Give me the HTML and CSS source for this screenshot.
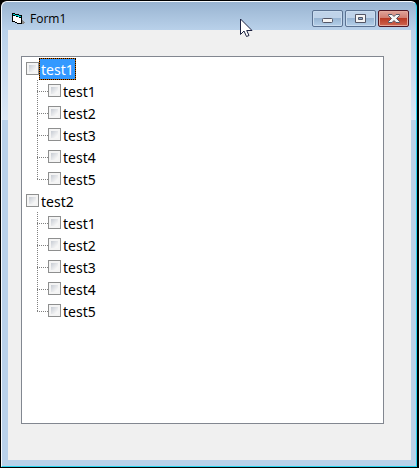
FILE: index.html
```html
<!doctype html>
<html lang="en">
    <head>
        <meta charset="UTF-8" />
        <meta name="viewport" content="width=device-width, initial-scale=1.0" />
        <title>Form1</title>
        <link rel="stylesheet" href="styles.css">
    </head>
    <body>
        <div class="window">
            <header class="titlebar">
                <svg class="app-icon" width="13" height="13" viewBox="0 0 13 13" shape-rendering="crispEdges">
                    <path d="M10 8h1v1h1v1h1v1h-1v1h-2z" fill="#888" />
                    <path d="M0 1h3v1h4v1h3v9H5v-1H3v-1H0z" fill="#000" />
                    <path d="M1 4h3v1h3v1h2v5H5v-1H3V9H1z" fill="#fff" />
                    <path d="M1 2h2v1h4v1h2v1H6V4H3V3H1z" fill="#00d5d5" />
                </svg>
                <h1 class="title">Form1</h1>
                <div class="controls">
                    <button class="control" type="button" aria-label="Minimize">
                        <svg width="12" height="12" viewBox="0 0 12 12">
                            <rect x=".5" y="6.5" width="10" height="4" rx="1" fill="#f4f4f4" stroke="#535666" />
                        </svg>
                    </button>
                    <button class="control" type="button" aria-label="Maximize">
                        <svg width="12" height="12" viewBox="0 0 12 12">
                            <path d="M.5 2.5h10v8H.5z" fill="#f4f4f4" stroke="#535666" stroke-linejoin="round" />
                            <path d="M3.5 5.5h4v2h-4z" fill="#8eaed0" stroke="#535666" />
                        </svg>
                    </button>
                    <button class="control close" type="button" aria-label="Close">
                        <svg width="12" height="12" viewBox="0 0 12 12">
                            <path d="M.5 2.500h3.500L6 4.500l2-2h3.500v1L8.500 6.500l3 3v1H8l-2-2-2 2H.5v-1l3-3-3-3z" fill="#f6f6f6" stroke="#535666" stroke-linejoin="round" />
                        </svg>
                    </button>
                </div>
            </header>
            <main class="client">
                <ul class="tree">
                    <li>
                        <label class="node"><input class="check" type="checkbox" /><span class="text selected">test1</span></label>
                        <ul class="branch">
                            <li><label class="node"><input class="check" type="checkbox" /><span class="text">test1</span></label></li>
                            <li><label class="node"><input class="check" type="checkbox" /><span class="text">test2</span></label></li>
                            <li><label class="node"><input class="check" type="checkbox" /><span class="text">test3</span></label></li>
                            <li><label class="node"><input class="check" type="checkbox" /><span class="text">test4</span></label></li>
                            <li><label class="node"><input class="check" type="checkbox" /><span class="text">test5</span></label></li>
                        </ul>
                    </li>
                    <li>
                        <label class="node"><input class="check" type="checkbox" /><span class="text">test2</span></label>
                        <ul class="branch">
                            <li><label class="node"><input class="check" type="checkbox" /><span class="text">test1</span></label></li>
                            <li><label class="node"><input class="check" type="checkbox" /><span class="text">test2</span></label></li>
                            <li><label class="node"><input class="check" type="checkbox" /><span class="text">test3</span></label></li>
                            <li><label class="node"><input class="check" type="checkbox" /><span class="text">test4</span></label></li>
                            <li><label class="node"><input class="check" type="checkbox" /><span class="text">test5</span></label></li>
                        </ul>
                    </li>
                </ul>
            </main>
        </div>
        <svg class="pointer" width="13" height="20" viewBox="0 0 13 20">
            <path d="M.5 1v15.500L4 13l2.500 5.500 2.500-1L6.700 12.500h5.300z" fill="#fff" stroke="#1c2140" />
        </svg>
    </body>
</html>
```

FILE: styles.css
```css
* {
    box-sizing: border-box;
}

body {
    display: flex;
    min-height: 100vh;
    margin: 0;
    padding: 1px 2px 1px 1px;
    background: #000;
    font-family: "Open Sans", "Noto Sans", sans-serif;
    color: #000;
}

.window {
    flex: 1;
    display: flex;
    flex-direction: column;
    padding: 0 5px 6px 6px;
    border: 1px solid #27d3ee;
    border-top-color: #f5f9fd;
    border-left-color: #f5f9fd;
    border-radius: 6px 6px 0 0;
    background:
        linear-gradient(#99b4d1, #b9d1ea) 0 0 / 100% 28px no-repeat,
        linear-gradient(#b9d1ea, #dce8f6) 0 28px / 100% 90px no-repeat,
        #b9d1ea;
}

.titlebar {
    display: flex;
    align-items: center;
    height: 28px;
    padding: 5px 2px 0 4px;
}

.app-icon {
    margin-right: 5px;
}

.title {
    flex: 1;
    margin: 0;
    font-size: 12px;
    font-weight: normal;
    line-height: 16px;
}

.controls {
    display: flex;
    gap: 2px;
}

.control {
    display: flex;
    align-items: center;
    justify-content: center;
    width: 31px;
    height: 17px;
    padding: 0 0 2px;
    border: 1px solid #5b7292;
    border-radius: 2px;
    background: linear-gradient(#bfd3e9 50%, #98b5d3 50%, #b5d0ea);
    box-shadow: inset 0 0 0 1px #c9dcef;
}

.close {
    border-color: #4f1725;
    background: linear-gradient(#e0a49b, #d07a6d 50%, #b93a25 50%, #cf6650);
    box-shadow: inset 0 0 0 1px #e5a99c;
}

.client {
    flex: 1;
    display: flex;
    padding: 26px 27px 36px 13px;
    background: #f0f0f0;
}

.tree {
    flex: 1;
    margin: 0;
    padding: 1px 4px;
    border: 1px solid #828790;
    background: #fff;
    list-style: none;
}

.node {
    display: flex;
    align-items: flex-start;
    height: 22px;
}

.check {
    appearance: none;
    width: 13px;
    height: 13px;
    margin: 4px 0 0;
    padding: 2px;
    border: 1px solid #8e8f8f;
    background: linear-gradient(135deg, #c6cbd3, #f6f6f6 80%) content-box, #f4f4f4;
}

.text {
    height: 22px;
    padding: 0 1px;
    border: 1px solid transparent;
    font-family: "Noto Sans", "Open Sans", sans-serif;
    font-size: 14px;
    line-height: 22px;
}

/* focus rectangle alternates black and orange dots */
.selected {
    border: 1px dotted #000;
    background:
        linear-gradient(#3399ff, #3399ff) padding-box,
        linear-gradient(#cc6600, #cc6600) border-box;
    color: #fff;
}

/* dotted trunk down to the last child */
.branch {
    margin: 0 0 0 11px;
    padding: 0;
    background: repeating-linear-gradient(#808080 0 1px, transparent 1px 2px) 0 0 / 1px calc(100% - 10px) no-repeat;
    list-style: none;
}

/* dotted arm from the trunk to the check box */
.branch > li {
    padding-left: 11px;
    background: repeating-linear-gradient(90deg, #808080 0 1px, transparent 1px 2px) 0 11px / 11px 1px no-repeat;
}

.pointer {
    position: absolute;
    top: 18px;
    left: 240px;
}
```
